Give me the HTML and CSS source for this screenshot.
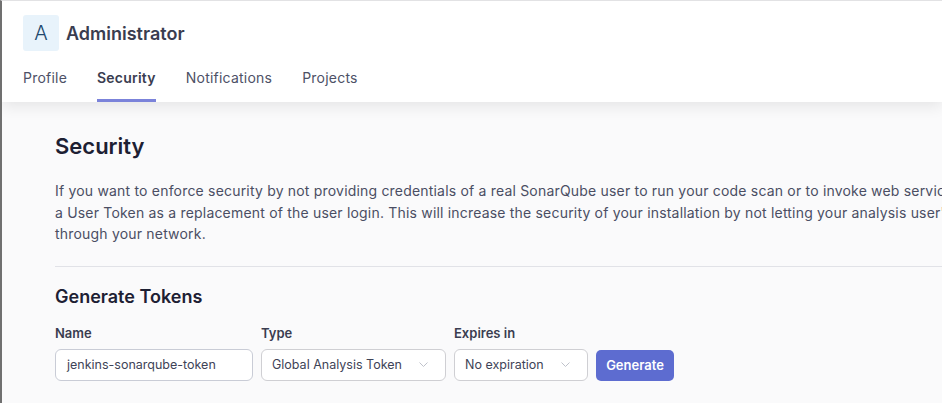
FILE: index.html
```html
<!DOCTYPE html>
<html>
<head>
<meta charset="utf-8">
<link rel="stylesheet" href="styles.css">
</head>
<body>
<div class="frame">
  <header class="header">
    <div class="user">
      <div class="avatar">A</div>
      <h1 class="user-name">Administrator</h1>
    </div>
    <nav class="tabs">
      <a class="tab">Profile</a>
      <a class="tab active">Security</a>
      <a class="tab">Notifications</a>
      <a class="tab">Projects</a>
    </nav>
  </header>
  <main class="content">
    <h2 class="title">Security</h2>
    <p class="intro">
      <span class="line">If you want to enforce security by not providing credentials of a real SonarQube user to run your code scan or to invoke web services, you can provide</span>
      <span class="line">a User Token as a replacement of the user login. This will increase the security of your installation by not letting your analysis user's password going</span>
      <span class="line">through your network.</span>
    </p>
    <hr class="divider">
    <h3 class="subtitle">Generate Tokens</h3>
    <form class="token-form">
      <div class="field">
        <label class="label">Name</label>
        <div class="input name-input">jenkins-sonarqube-token</div>
      </div>
      <div class="field">
        <label class="label">Type</label>
        <div class="input select type-select">Global Analysis Token
          <svg class="chev" width="9" height="5" viewBox="0 0 9 5"><path d="M0.5 0.5l4 4 4-4" fill="none" stroke="#bfc2cb" stroke-width="1"/></svg>
        </div>
      </div>
      <div class="field">
        <label class="label">Expires in</label>
        <div class="input select exp-select">No expiration
          <svg class="chev" width="9" height="5" viewBox="0 0 9 5"><path d="M0.5 0.5l4 4 4-4" fill="none" stroke="#bfc2cb" stroke-width="1"/></svg>
        </div>
      </div>
      <button type="button" class="btn">Generate</button>
    </form>
  </main>
</div>
</body>
</html>
```
FILE: styles.css
```css
* { box-sizing: border-box; }
html, body { margin: 0; padding: 0; }
body {
  width: 942px;
  height: 403px;
  overflow: hidden;
  font-family: Inter, "Noto Sans", sans-serif;
  background: #fafafb;
  color: #3e4357;
}
.frame {
  height: 403px;
  border-left: 2px solid #707070;
  border-top: 1px solid #e2e2e4;
  overflow: hidden;
}
.header {
  background: #fff;
  padding: 14px 0 0 21px;
  box-shadow: 0 4px 14px rgba(0, 0, 0, 0.09);
  position: relative;
  z-index: 1;
}
.user {
  display: flex;
  align-items: center;
  gap: 7px;
}
.avatar {
  width: 36px;
  height: 36px;
  border-radius: 3px;
  background: #e8f3fb;
  color: #20486d;
  font-size: 20px;
  font-weight: 300;
  display: flex;
  align-items: center;
  justify-content: center;
}
.user-name {
  margin: 0;
  font-size: 18px;
  font-weight: 600;
  color: #3a3d50;
}
.tabs {
  display: flex;
  gap: 30px;
  margin-top: 18px;
}
.tab {
  font-size: 14px;
  letter-spacing: 0.22px;
  color: #4d5166;
  padding-bottom: 12px;
  border-bottom: 3px solid transparent;
  line-height: 18px;
}
.tab.active {
  font-weight: 600;
  color: #3a3d50;
  border-bottom-color: #7b83da;
}
.content {
  padding: 30px 0 0 53px;
  width: 1200px;
}
.title {
  margin: 0;
  font-size: 22px;
  font-weight: 600;
  color: #1d2033;
  line-height: 28px;
}
.intro {
  margin: 20px 0 0;
  font-size: 14px;
  letter-spacing: 0.19px;
  line-height: 21.5px;
  color: #4a4e63;
}
.line { display: block; white-space: nowrap; }
.divider {
  border: 0;
  border-top: 1px solid #e1e2e7;
  margin: 21px 0 0;
}
.subtitle {
  margin: 19px 0 0;
  font-size: 18px;
  font-weight: 600;
  color: #1d2033;
  line-height: 22px;
}
.token-form {
  display: flex;
  align-items: flex-end;
  gap: 8px;
  margin-top: 17px;
}
.field {
  display: flex;
  flex-direction: column;
  gap: 8px;
}
.label {
  font-size: 13px;
  font-weight: 600;
  color: #3a3d50;
  line-height: 16px;
}
.input {
  height: 32px;
  border: 1px solid #c9ccd6;
  border-radius: 6px;
  background: #fff;
  font-size: 12.5px;
  color: #3e4357;
  display: flex;
  align-items: center;
  padding: 0 11px;
}
.name-input { width: 198px; }
.select { justify-content: space-between; padding-right: 17px; border-color: #cfcfd3; }
.type-select { width: 185px; padding-left: 10px; }
.exp-select { width: 134px; padding-left: 10px; }
.chev { flex: none; }
.btn {
  height: 31px;
  width: 78px;
  padding: 0;
  border: 0;
  border-radius: 5px;
  background: #5d6cd0;
  color: #fff;
  font-family: inherit;
  font-size: 13px;
  font-weight: 600;
  margin-bottom: 0;
}
```
